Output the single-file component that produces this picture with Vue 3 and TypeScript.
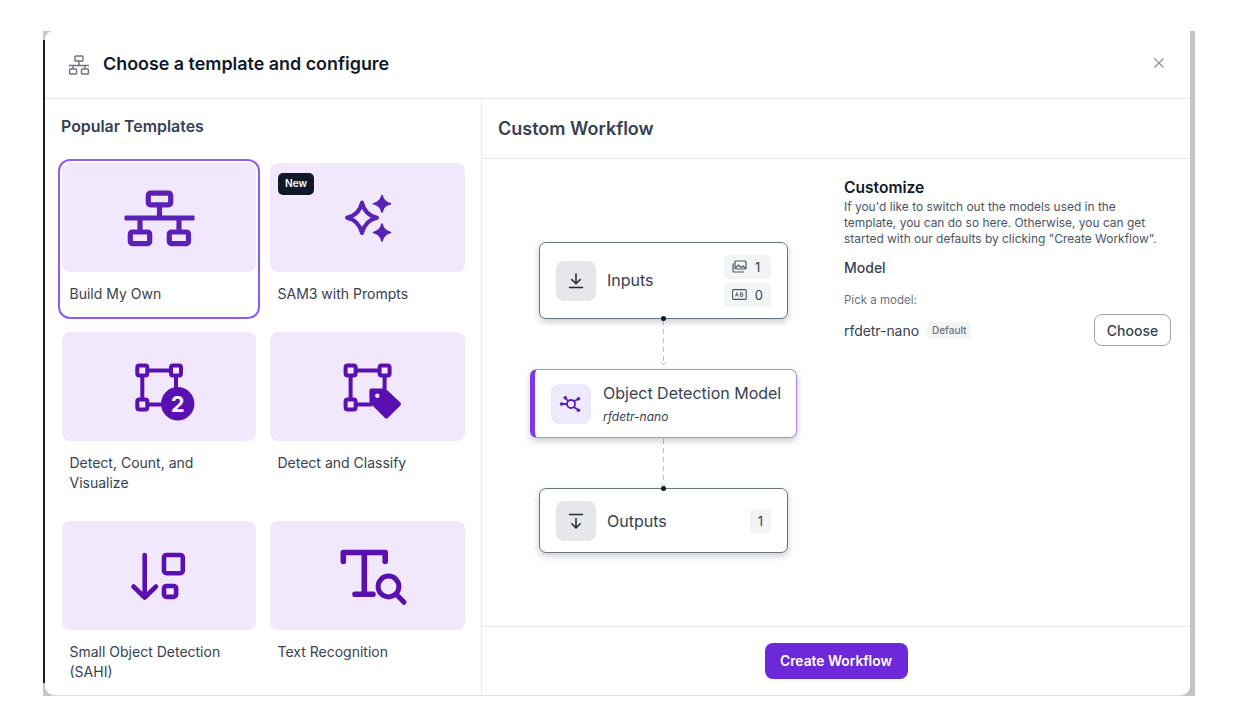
<script setup lang="ts">
interface Template {
  id: string
  label: string
  badge?: string
  selected?: boolean
}

const templates: Template[] = [
  { id: 'build', label: 'Build My Own', selected: true },
  { id: 'sam', label: 'SAM3 with Prompts', badge: 'New' },
  { id: 'count', label: 'Detect, Count, and Visualize' },
  { id: 'classify', label: 'Detect and Classify' },
  { id: 'small', label: 'Small Object Detection (SAHI)' },
  { id: 'text', label: 'Text Recognition' },
]
</script>

<template>
  <div class="page">
    <div class="frame">
      <div class="modal">
        <header class="modal-head">
          <svg class="head-icon" width="22" height="20" viewBox="0 0 22 20" fill="none" stroke="#6b7280" stroke-width="1.4">
            <rect x="7" y="1" width="8" height="5" rx="0.8" />
            <path d="M11 6v4M1 10.5h20M5 11v3M17 11v3" />
            <rect x="1.6" y="14" width="7" height="5" rx="0.8" />
            <rect x="13.4" y="14" width="7" height="5" rx="0.8" />
          </svg>
          <h1 class="modal-title">Choose a template and configure</h1>
          <svg class="close" width="10" height="10" viewBox="0 0 10 10" stroke="#858b96" stroke-width="1.1">
            <path d="M0.5 0.5l9 9M9.5 0.5l-9 9" />
          </svg>
        </header>

        <div class="modal-body">
          <aside class="templates">
            <h2 class="templates-title">Popular Templates</h2>
            <div class="template-grid">
              <div
                v-for="t in templates"
                :key="t.id"
                class="template"
                :class="{ selected: t.selected }"
              >
                <div class="thumb">
                  <span v-if="t.badge" class="badge-new">{{ t.badge }}</span>

                  <svg v-if="t.id === 'build'" width="80" height="80" viewBox="0 0 80 80" fill="none" stroke="#5b21b6" stroke-width="5.2">
                    <rect x="29.3" y="15.2" width="22.4" height="11.6" rx="2" />
                    <path d="M40.5 27v11M21 42v12M60 42v12" />
                    <rect x="5.5" y="37.5" width="70" height="5" rx="1" fill="#5b21b6" stroke="none" />
                    <rect x="11.3" y="54" width="19.4" height="11.6" rx="2" />
                    <rect x="50.3" y="54" width="19.2" height="11.6" rx="2" />
                  </svg>

                  <svg v-else-if="t.id === 'sam'" width="80" height="80" viewBox="0 0 80 80" fill="none" stroke="#5b21b6">
                    <path d="M34 24.5Q36.8 37 49 39.8Q36.8 42.6 34 55Q31.2 42.6 19 39.8Q31.2 37 34 24.5Z" stroke-width="4" stroke-linejoin="round" />
                    <path d="M54 17.5Q55.5 24.3 62.5 25.8Q55.5 27.3 54 34Q52.5 27.3 45.5 25.8Q52.5 24.3 54 17.5Z" fill="#5b21b6" stroke-width="1.6" stroke-linejoin="round" />
                    <path d="M54 46Q55.5 53 62.5 54.5Q55.5 56 54 63Q52.5 56 45.5 54.5Q52.5 53 54 46Z" fill="#5b21b6" stroke-width="1.6" stroke-linejoin="round" />
                  </svg>

                  <svg v-else-if="t.id === 'count'" width="80" height="80" viewBox="0 0 80 80" fill="none" stroke="#5a0fb0" stroke-width="4">
                    <path d="M28.5 23.5H52M23.3 28.5V52.5M28.5 57.5H50M57 28.5V50" />
                    <rect x="18.3" y="18.5" width="10" height="10" rx="2" />
                    <rect x="52" y="18.5" width="10" height="10" rx="2" />
                    <rect x="18.3" y="52.5" width="10" height="10" rx="2" />
                    <circle cx="58.7" cy="56.8" r="16.7" fill="#5a0fb0" stroke="none" />
                    <text x="58.7" y="64.6" text-anchor="middle" class="circle-num">2</text>
                  </svg>

                  <svg v-else-if="t.id === 'classify'" width="80" height="80" viewBox="0 0 80 80" fill="none" stroke="#5a0fb0" stroke-width="4">
                    <path d="M27.6 23.5H51.6M22.6 28.5V52.5M27.6 57.5H44M56.6 28.5V42" />
                    <rect x="17.6" y="18.5" width="10" height="10" rx="2" />
                    <rect x="51.6" y="18.5" width="10" height="10" rx="2" />
                    <rect x="17.6" y="52.5" width="10" height="10" rx="2" />
                    <path d="M43.4 43.4H56.6L71 57L58.4 69.5L43.4 54.6Z" fill="#5a0fb0" stroke-linejoin="round" />
                    <circle cx="49.3" cy="48.8" r="2.2" fill="#f2e8fd" stroke="none" />
                  </svg>

                  <svg v-else-if="t.id === 'small'" width="80" height="80" viewBox="0 0 80 80" fill="none" stroke="#5a0fb0" stroke-width="4.6" stroke-linecap="round" stroke-linejoin="round">
                    <path d="M25.7 19V61M14.5 50.5L25.7 61.5L37 50.5" />
                    <rect x="45" y="19" width="18.8" height="18.2" rx="2.5" />
                    <rect x="45" y="50" width="12.1" height="10.9" rx="2.5" />
                  </svg>

                  <svg v-else width="80" height="80" viewBox="0 0 80 80" fill="none" stroke="#5a0fb0" stroke-width="5.6" stroke-linecap="round" stroke-linejoin="round">
                    <path d="M15.3 25.5V16.5H57.2V25.5M36.3 16.5V58.3M27 58.3H45" />
                    <circle cx="60.5" cy="50.5" r="10.4" stroke-width="5" />
                    <path d="M68.5 58.5L76 66.3" stroke-width="5" />
                  </svg>
                </div>
                <div class="template-label">{{ t.label }}</div>
              </div>
            </div>
          </aside>

          <section class="detail">
            <h2 class="detail-title">Custom Workflow</h2>

            <div class="detail-main">
              <div class="canvas">
                <div class="node node-io">
                  <span class="node-icon">
                    <svg width="18" height="18" viewBox="0 0 18 18" fill="none" stroke="#1f2937" stroke-width="1.5" stroke-linecap="round" stroke-linejoin="round">
                      <path d="M9 2v9.5M4.8 7.6L9 11.8l4.2-4.2M2.5 15.6h13" />
                    </svg>
                  </span>
                  <span class="node-name inputs-name">Inputs</span>
                  <div class="counts">
                    <span class="count">
                      <svg width="15" height="13" viewBox="0 0 15 13" fill="none" stroke="#4b5563" stroke-width="1.2">
                        <rect x="3" y="1" width="11" height="8" rx="1" />
                        <path d="M1 3.5V11a1 1 0 0 0 1 1h10" />
                        <path d="M3.5 8l3-3 2.5 2.5 2-1.5 2.5 2.5" />
                      </svg>
                      <span>1</span>
                    </span>
                    <span class="count">
                      <svg width="15" height="11" viewBox="0 0 15 11" fill="none" stroke="#4b5563" stroke-width="1.1">
                        <rect x="0.6" y="0.6" width="13.8" height="9.8" rx="1" />
                        <path d="M3.5 7.5l1.4-4 1.4 4M4 6.2h1.8M8.5 3.5v4h1.6a1 1 0 0 0 0-2H8.5h1.4a1 1 0 0 0 0-2z" stroke-width="0.8" />
                      </svg>
                      <span>0</span>
                    </span>
                  </div>
                  <i class="port port-bottom"></i>
                </div>

                <div class="link">
                  <svg width="11" height="50" viewBox="0 0 11 50" fill="none" stroke="#b9bcc2" stroke-width="1">
                    <path d="M5.5 1V45" stroke-dasharray="5 4" />
                    <path d="M3 43L5.5 46L8 43" />
                  </svg>
                </div>

                <div class="node node-model">
                  <span class="node-icon violet">
                    <svg width="24" height="24" viewBox="0 0 24 24" fill="none" stroke="#5b21b6" stroke-width="1.8">
                      <circle cx="12" cy="12" r="4" />
                      <path d="M9 9L6.5 6M15 9.5L19 7M8 12H3M15 15L19 18" />
                      <g fill="#5b21b6" stroke="none">
                        <circle cx="6.3" cy="5.8" r="1.8" />
                        <circle cx="19.5" cy="6.8" r="1.8" />
                        <circle cx="2.6" cy="12" r="1.8" />
                        <circle cx="19.5" cy="18.3" r="1.8" />
                      </g>
                    </svg>
                  </span>
                  <div class="model-text">
                    <span class="node-name">Object Detection Model</span>
                    <span class="model-sub">rfdetr-nano</span>
                  </div>
                </div>

                <div class="link">
                  <svg width="11" height="50" viewBox="0 0 11 50" fill="none" stroke="#b9bcc2" stroke-width="1">
                    <path d="M5.5 1V46" stroke-dasharray="5 4" />
                    <path d="M3 45.5L5.5 48.5L8 45.5" />
                  </svg>
                </div>

                <div class="node node-io node-out">
                  <span class="node-icon">
                    <svg width="18" height="18" viewBox="0 0 18 18" fill="none" stroke="#1f2937" stroke-width="1.5" stroke-linecap="round" stroke-linejoin="round">
                      <path d="M2.5 2.4h13M9 6.4V16M4.8 11.8L9 16l4.2-4.2" />
                    </svg>
                  </span>
                  <span class="node-name">Outputs</span>
                  <span class="count single">1</span>
                  <i class="port port-top"></i>
                </div>
              </div>

              <div class="customize">
                <h3 class="customize-title">Customize</h3>
                <p class="customize-text">
                  If you'd like to switch out the models used in the<br />
                  template, you can do so here. Otherwise, you can get<br />
                  started with our defaults by clicking "Create Workflow".
                </p>
                <h4 class="model-heading">Model</h4>
                <div class="pick-label">Pick a model:</div>
                <div class="model-row">
                  <span class="model-name">rfdetr-nano</span>
                  <span class="badge-default">Default</span>
                  <button class="btn-choose">Choose</button>
                </div>
              </div>
            </div>

            <footer class="detail-foot">
              <button class="btn-create">Create Workflow</button>
            </footer>
          </section>
        </div>
      </div>
    </div>
  </div>
</template>

<style>
html,
body {
  margin: 0;
  background: #fff;
  overflow: hidden;
}
</style>

<style scoped>
.page {
  width: 1240px;
  height: 710px;
  padding: 31px 0 0 43px;
  box-sizing: border-box;
  font-family: Inter, "Liberation Sans", sans-serif;
  color: #374151;
}

/* what shows of the page behind the dialog */
.frame {
  width: 1152px;
  height: 665px;
  padding: 0 5px 0 2px;
  box-sizing: border-box;
  background:
    linear-gradient(#c8c8c8 0 9px, #1c1c2a 9px 652px, #c8c8c8 652px) left / 2px 100% no-repeat,
    #c4c4c4;
}

.modal {
  height: 100%;
  background: #fff;
  border-radius: 8px 0 10px 10px;
  border-bottom: 1px solid #e2e2e4;
  box-sizing: border-box;
  display: flex;
  flex-direction: column;
  overflow: hidden;
}

.modal-head {
  flex: none;
  height: 68px;
  box-sizing: border-box;
  padding: 0 26px 2px 23px;
  display: flex;
  align-items: center;
  border-bottom: 1px solid #e9eaec;
}

.head-icon {
  margin-right: 13px;
  margin-top: 2px;
}

.modal-title {
  margin: 0;
  flex: 1;
  font-size: 17.9px;
  line-height: 28px;
  font-weight: 600;
  color: #111827;
}

.close {
  margin-top: -2px;
}

.modal-body {
  flex: 1;
  min-height: 0;
  display: flex;
}

.templates {
  width: 437px;
  flex: none;
  box-sizing: border-box;
  padding: 18px 0 0 13px;
  border-right: 1px solid #e9eaec;
}

.templates-title {
  margin: 0 0 22px 3px;
  font-size: 15.9px;
  line-height: 20px;
  font-weight: 600;
  color: #374151;
}

.template-grid {
  display: grid;
  grid-template-columns: 202px 203px;
  column-gap: 6px;
  row-gap: 9px;
}

.template {
  padding: 2px;
  border: 2px solid transparent;
  border-radius: 12px;
  padding-bottom: 13px;
}

.template.selected {
  border-color: #8b5cf6;
}

.thumb {
  height: 109px;
  background: #f2e8fd;
  border-radius: 8px;
  display: flex;
  align-items: center;
  justify-content: center;
  position: relative;
}

.badge-new {
  position: absolute;
  left: 8px;
  top: 10px;
  padding: 0 7px;
  height: 22px;
  line-height: 21px;
  border-radius: 5px;
  background: #111827;
  color: #fff;
  font-size: 10.2px;
  font-weight: 600;
}

.circle-num {
  font-family: Inter, "Liberation Sans", sans-serif;
  font-size: 22px;
  font-weight: 700;
  fill: #f7f0ff;
  stroke: none;
}

.template-label {
  margin-top: 12px;
  padding: 0 7.5px;
  font-size: 14px;
  line-height: 20px;
  color: #374151;
}

.detail {
  flex: 1;
  min-width: 0;
  display: flex;
  flex-direction: column;
}

.detail-title {
  flex: none;
  margin: 0;
  height: 60px;
  box-sizing: border-box;
  padding: 15.5px 16px 0;
  font-size: 18px;
  line-height: 28px;
  font-weight: 600;
  color: #374151;
  border-bottom: 1px solid #e9eaec;
}

.detail-main {
  flex: 1;
  min-height: 0;
  display: flex;
}

.canvas {
  width: 362px;
  flex: none;
  box-sizing: border-box;
  margin: 16px 0;
  padding: 67px 14px 0 15px;
  background-image: radial-gradient(#f9f9fa 0.8px, transparent 0.8px);
  background-size: 8px 8px;
  background-clip: content-box;
  display: flex;
  flex-direction: column;
  align-items: center;
}

.node {
  flex: none;
  box-sizing: border-box;
  background: #fff;
  border: 1px solid #6b7280;
  border-radius: 7px;
  box-shadow: 0 3px 6px rgba(17, 24, 39, 0.22);
  display: flex;
  align-items: center;
  position: relative;
}

.node-io {
  width: 249px;
  height: 77px;
  padding: 0 16px;
}

.node-out {
  height: 65px;
}

.node-model {
  width: 267px;
  height: 69px;
  padding-left: 16px;
  border: 1.5px solid #a78bfa;
  border-left: 5px solid #7c3aed;
}

.node-icon {
  flex: none;
  width: 40px;
  height: 40px;
  border-radius: 8px;
  background: #e5e7eb;
  display: flex;
  align-items: center;
  justify-content: center;
  margin-right: 11px;
}

.node-icon.violet {
  background: #ede9fe;
}

.node-name {
  flex: 1;
  font-size: 16px;
  line-height: 20px;
  color: #374151;
  white-space: nowrap;
}

.inputs-name {
  margin-top: -2px;
}

.model-text {
  margin-left: 1px;
  display: flex;
  flex-direction: column;
}

.model-sub {
  margin-top: 6px;
  font-size: 12px;
  line-height: 16px;
  font-style: italic;
  color: #374151;
}

.counts {
  display: flex;
  flex-direction: column;
  gap: 4px;
}

.count {
  width: 47px;
  height: 24px;
  box-sizing: border-box;
  padding: 0 8px;
  border-radius: 4px;
  background: #f3f4f6;
  display: flex;
  align-items: center;
  gap: 8px;
  font-size: 13px;
  color: #374151;
}

.count.single {
  width: 21px;
  padding: 0;
  justify-content: center;
}

.port {
  position: absolute;
  left: 121px;
  width: 5px;
  height: 5px;
  border-radius: 50%;
  background: #111827;
}

.port-bottom {
  bottom: -3px;
}

.port-top {
  top: -3px;
}

.link {
  flex: none;
  height: 50px;
}

.link svg {
  display: block;
}

.customize {
  flex: 1;
  min-width: 0;
  padding: 19px 19px 0 0;
}

.customize-title {
  margin: 0;
  font-size: 15.6px;
  line-height: 20px;
  font-weight: 600;
  color: #111827;
}

.customize-text {
  margin: 1px 0 0;
  font-size: 11.95px;
  line-height: 15.8px;
  color: #4b5563;
  white-space: nowrap;
}

.model-heading {
  margin: 12px 0 0;
  font-size: 14px;
  line-height: 20px;
  font-weight: 500;
  color: #374151;
}

.pick-label {
  margin-top: 14px;
  font-size: 11.5px;
  line-height: 16px;
  color: #6b7280;
}

.model-row {
  margin-top: 6px;
  display: flex;
  align-items: center;
}

.model-name {
  font-size: 14px;
  letter-spacing: -0.05px;
  color: #374151;
}

.badge-default {
  margin-left: 8px;
  padding: 0 5px;
  height: 17px;
  line-height: 17px;
  border-radius: 4px;
  background: #f3f4f6;
  font-size: 10px;
  font-weight: 500;
  color: #6b7280;
}

.btn-choose {
  margin-left: auto;
  width: 77px;
  height: 32px;
  box-sizing: border-box;
  background: #fff;
  border: 1px solid #9ca3af;
  border-radius: 8px;
  font-family: inherit;
  font-size: 14px;
  font-weight: 500;
  color: #374151;
}

.detail-foot {
  flex: none;
  height: 69px;
  box-sizing: border-box;
  border-top: 1px solid #e9eaec;
  padding-top: 16px;
  display: flex;
  justify-content: center;
}

.btn-create {
  width: 143px;
  height: 36px;
  background: #6d28d9;
  border: none;
  border-radius: 8px;
  font-family: inherit;
  font-size: 13.8px;
  font-weight: 600;
  color: #fff;
}
</style>
